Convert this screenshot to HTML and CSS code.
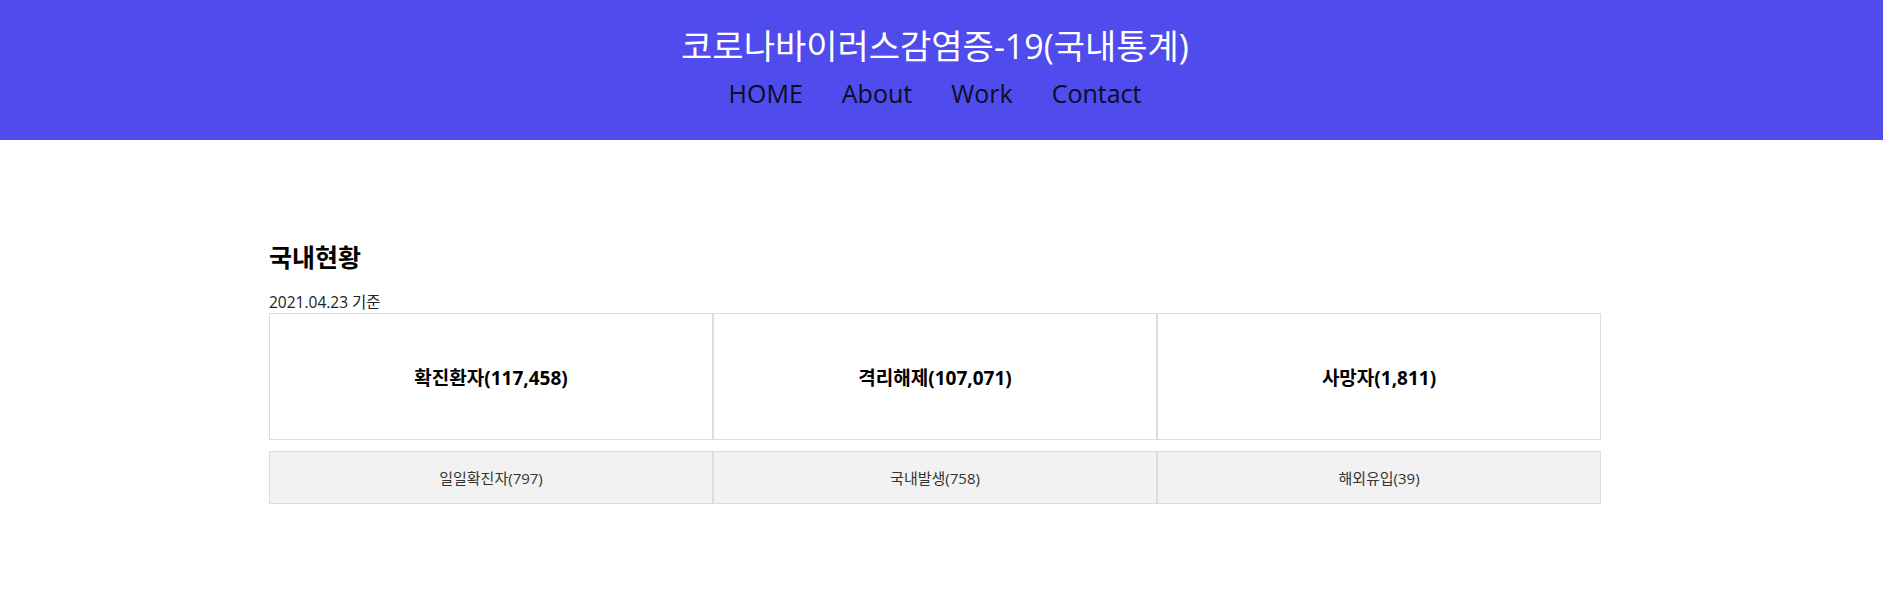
FILE: index.html
```html
<!DOCTYPE html>
<html lang="ko">
<head>
<meta charset="utf-8">
<title>코로나바이러스감염증-19(국내통계)</title>
<link rel="stylesheet" href="styles.css">
</head>
<body>
<header class="site-header">
  <h1 class="site-title">코로나바이러스감염증-19(국내통계)</h1>
  <nav class="site-nav">
    <a href="#" class="nav-link">HOME</a>
    <a href="#" class="nav-link">About</a>
    <a href="#" class="nav-link">Work</a>
    <a href="#" class="nav-link">Contact</a>
  </nav>
</header>
<main class="status">
  <h2 class="status-title">국내현황</h2>
  <p class="status-date">2021.04.23 기준</p>
  <div class="stat-row stat-row-main">
    <div class="stat-cell">확진환자(117,458)</div>
    <div class="stat-cell">격리해제(107,071)</div>
    <div class="stat-cell">사망자(1,811)</div>
  </div>
  <div class="stat-row stat-row-sub">
    <div class="stat-cell">일일확진자(797)</div>
    <div class="stat-cell">국내발생(758)</div>
    <div class="stat-cell">해외유입(39)</div>
  </div>
</main>
</body>
</html>
```
FILE: styles.css
```css
* { box-sizing: border-box; }
body {
  margin: 0;
  font-family: "Open Sans", "Noto Sans CJK KR", sans-serif;
  color: #000;
  background: #fff;
}
.site-header {
  height: 140px;
  background: #4f4bec;
  text-align: center;
  padding: 25px 13px 0 0;
}
.site-title {
  margin: 0;
  font-size: 34px;
  font-weight: 400;
  line-height: 42px;
  color: #fff;
}
.site-nav {
  display: flex;
  justify-content: center;
  gap: 39px;
  margin-top: 10px;
}
.nav-link {
  font-size: 25px;
  line-height: 32px;
  color: #0d0d26;
  text-decoration: none;
}
.status {
  padding: 0 282px 0 269px;
}
.status-title {
  margin: 100px 0 0;
  font-size: 25px;
  line-height: 34px;
  font-weight: 700;
}
.status-date {
  margin: 17px 0 0;
  font-size: 15.5px;
  line-height: 22px;
  color: #222;
}
.stat-row {
  display: grid;
  grid-template-columns: repeat(3, 1fr);
}
.stat-cell {
  border: 1px solid #dcdcdc;
  display: flex;
  align-items: center;
  justify-content: center;
}
.stat-row-main .stat-cell {
  height: 127px;
  font-size: 19px;
  font-weight: 700;
}
.stat-row-sub {
  margin-top: 11px;
}
.stat-row-sub .stat-cell {
  height: 53px;
  background: #f2f2f2;
  font-size: 15px;
  color: #333;
}
```
